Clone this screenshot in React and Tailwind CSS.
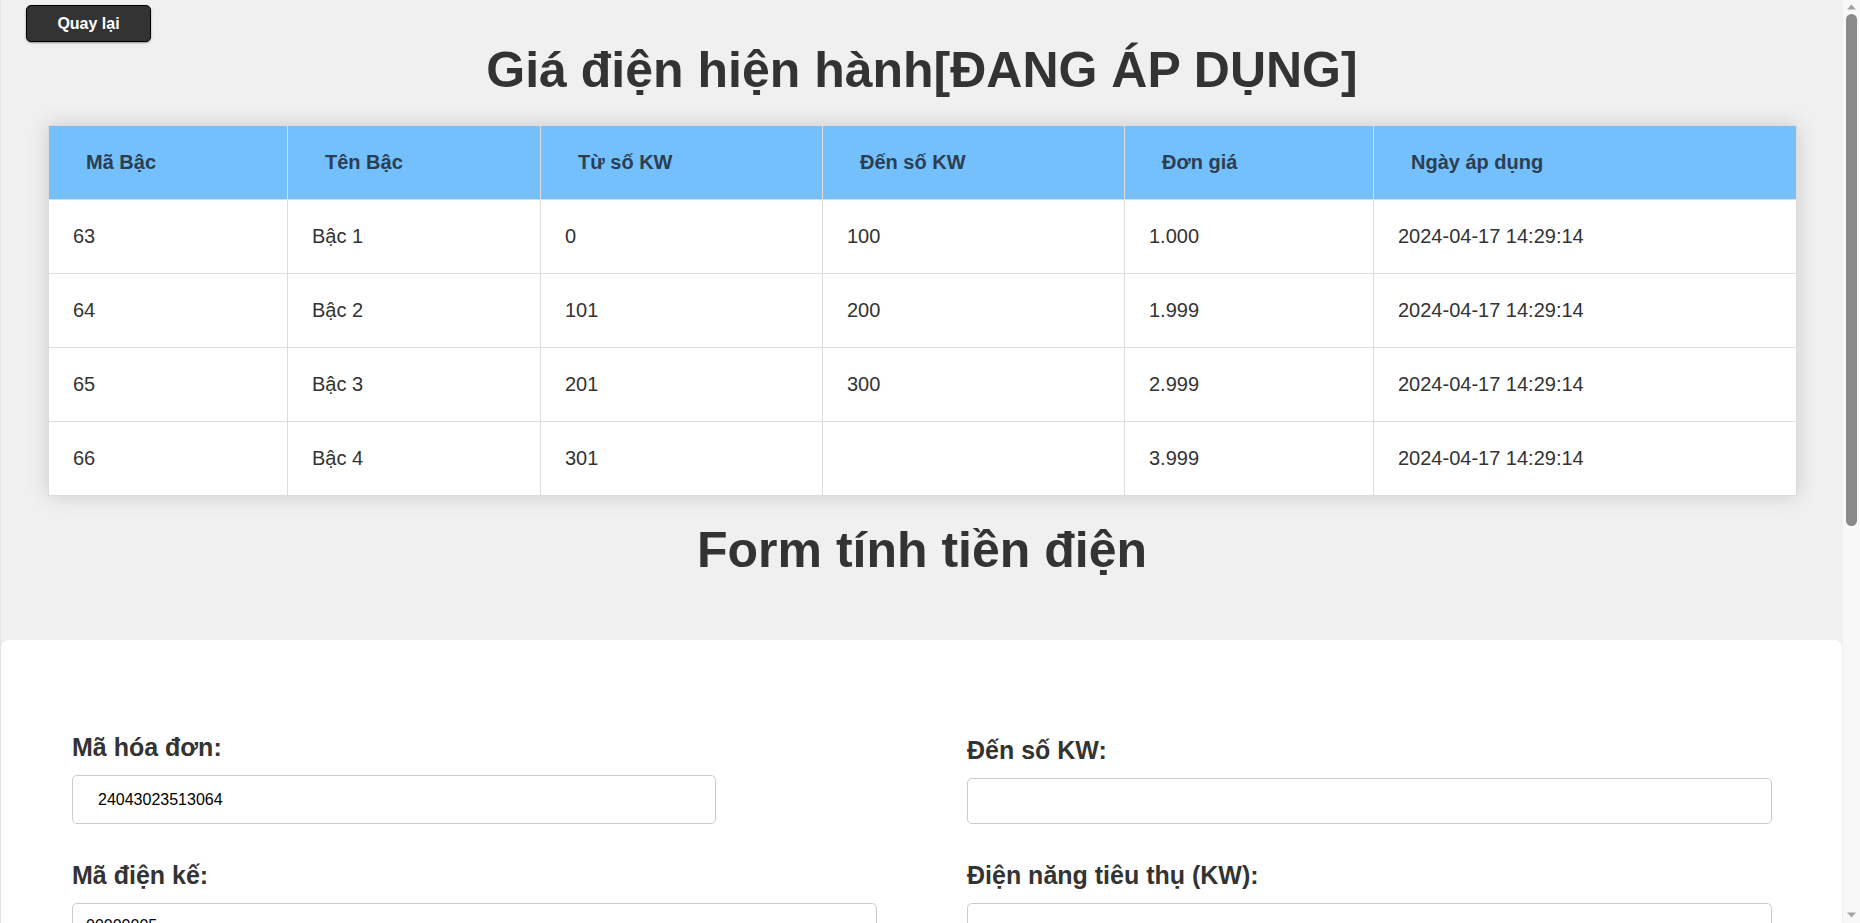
import { useState } from 'react';

const tiers = [
  { id: 63, name: 'Bậc 1', from: '0', to: '100', price: '1.000', date: '2024-04-17 14:29:14' },
  { id: 64, name: 'Bậc 2', from: '101', to: '200', price: '1.999', date: '2024-04-17 14:29:14' },
  { id: 65, name: 'Bậc 3', from: '201', to: '300', price: '2.999', date: '2024-04-17 14:29:14' },
  { id: 66, name: 'Bậc 4', from: '301', to: '', price: '3.999', date: '2024-04-17 14:29:14' },
];

const columns = [
  { label: 'Mã Bậc', width: 'w-[239px]' },
  { label: 'Tên Bậc', width: 'w-[253px]' },
  { label: 'Từ số KW', width: 'w-[282px]' },
  { label: 'Đến số KW', width: 'w-[302px]' },
  { label: 'Đơn giá', width: 'w-[249px]' },
  { label: 'Ngày áp dụng', width: 'w-[423px]' },
];

const Field = ({ label, value, onChange, className = 'w-full h-[46px] px-[13px]' }) => (
  <div className="flex flex-col">
    <label className="block text-[25px] leading-none font-bold text-[#333] mb-[15px]">{label}</label>
    <input
      type="text"
      value={value}
      onChange={(e) => onChange(e.target.value)}
      className={`${className} border border-[#ccc] rounded-[5px] bg-white text-[16px] text-black outline-none`}
    />
  </div>
);

// Classic window scrollbar strip on the right edge
const ScrollBar = () => (
  <div className="fixed top-0 right-0 h-screen w-[17px] bg-[#f8f8f8] flex flex-col items-center">
    <svg width="9" height="6" viewBox="0 0 9 6" className="mt-[4px] shrink-0">
      <path d="M0 5.5 L4.5 0.5 L9 5.5 Z" fill="#a3a3a3" />
    </svg>
    <div className="mt-[4px] h-[512px] w-[11px] rounded-full bg-[#8a8a8a]" />
    <div className="flex-1" />
    <svg width="9" height="6" viewBox="0 0 9 6" className="mb-[5px] shrink-0">
      <path d="M0 0.5 L9 0.5 L4.5 5.5 Z" fill="#a3a3a3" />
    </svg>
  </div>
);

const App = () => {
  const [form, setForm] = useState({
    invoice: '24043023513064',
    meter: '00000005',
    fromKw: '',
    toKw: '',
    usage: '',
    total: '',
  });

  const update = (key) => (val) => setForm({ ...form, [key]: val });

  return (
    <div className="bg-[#f8f8f8]">
      <div className="mr-[17px] min-h-screen bg-[#f0f0f0] border-l border-[#e3e3e3] font-['Liberation_Sans',Arial,sans-serif] text-[#333]">
        {/* Back button */}
        <div className="pt-[5px] pl-[25px]">
          <button className="w-[125px] h-[37px] bg-[#333] border border-black rounded-[5px] shadow-[0_1px_2px_rgba(0,0,0,0.4)] text-white text-[16px] font-bold">
            Quay lại
          </button>
        </div>

        <h1 className="mt-[3px] mb-[30px] text-center text-[50px] leading-none font-bold text-[#333]">
          Giá điện hiện hành[ĐANG ÁP DỤNG]
        </h1>

        {/* Price tiers */}
        <div className="mx-[47px]">
          <table className="w-full table-fixed border-collapse bg-white shadow-[0_0_20px_rgba(0,0,0,0.15)]">
            <thead>
              <tr className="bg-[#74c0fc]">
                {columns.map((c) => (
                  <th
                    key={c.label}
                    className={`${c.width} border border-[#ddd] pl-[37px] pr-4 py-[25px] text-left text-[20px] leading-[23px] font-bold text-[#2c3e50]`}
                  >
                    {c.label}
                  </th>
                ))}
              </tr>
            </thead>
            <tbody>
              {tiers.map((t) => (
                <tr key={t.id}>
                  {[t.id, t.name, t.from, t.to, t.price, t.date].map((v, i) => (
                    <td
                      key={i}
                      className="border border-[#ddd] pl-[24px] pr-4 py-[25px] text-[20px] leading-[23px] text-[#333]"
                    >
                      {v}
                    </td>
                  ))}
                </tr>
              ))}
            </tbody>
          </table>
        </div>

        <h1 className="mt-[29px] mb-[65px] text-center text-[50px] leading-none font-bold text-[#333]">
          Form tính tiền điện
        </h1>

        {/* Calculator form */}
        <div className="mr-px bg-white rounded-t-lg pt-[95px] pb-[120px] pl-[71px] pr-[70px]">
          <div className="grid grid-cols-2 gap-x-[90px] gap-y-[39px] items-end">
            <Field
              label="Mã hóa đơn:"
              value={form.invoice}
              onChange={update('invoice')}
              className="w-[644px] h-[49px] px-[25px]"
            />
            <Field label="Đến số KW:" value={form.toKw} onChange={update('toKw')} />
            <Field label="Mã điện kế:" value={form.meter} onChange={update('meter')} />
            <Field label="Điện năng tiêu thụ (KW):" value={form.usage} onChange={update('usage')} />
            <Field label="Từ số KW:" value={form.fromKw} onChange={update('fromKw')} />
            <Field label="Thành tiền:" value={form.total} onChange={update('total')} />
          </div>
          <div className="mt-[50px] flex justify-center">
            <button className="w-[200px] h-[50px] bg-[#333] rounded-[5px] text-white text-[18px] font-bold">
              Tính tiền
            </button>
          </div>
        </div>
      </div>
      <ScrollBar />
    </div>
  );
};

export default App;
